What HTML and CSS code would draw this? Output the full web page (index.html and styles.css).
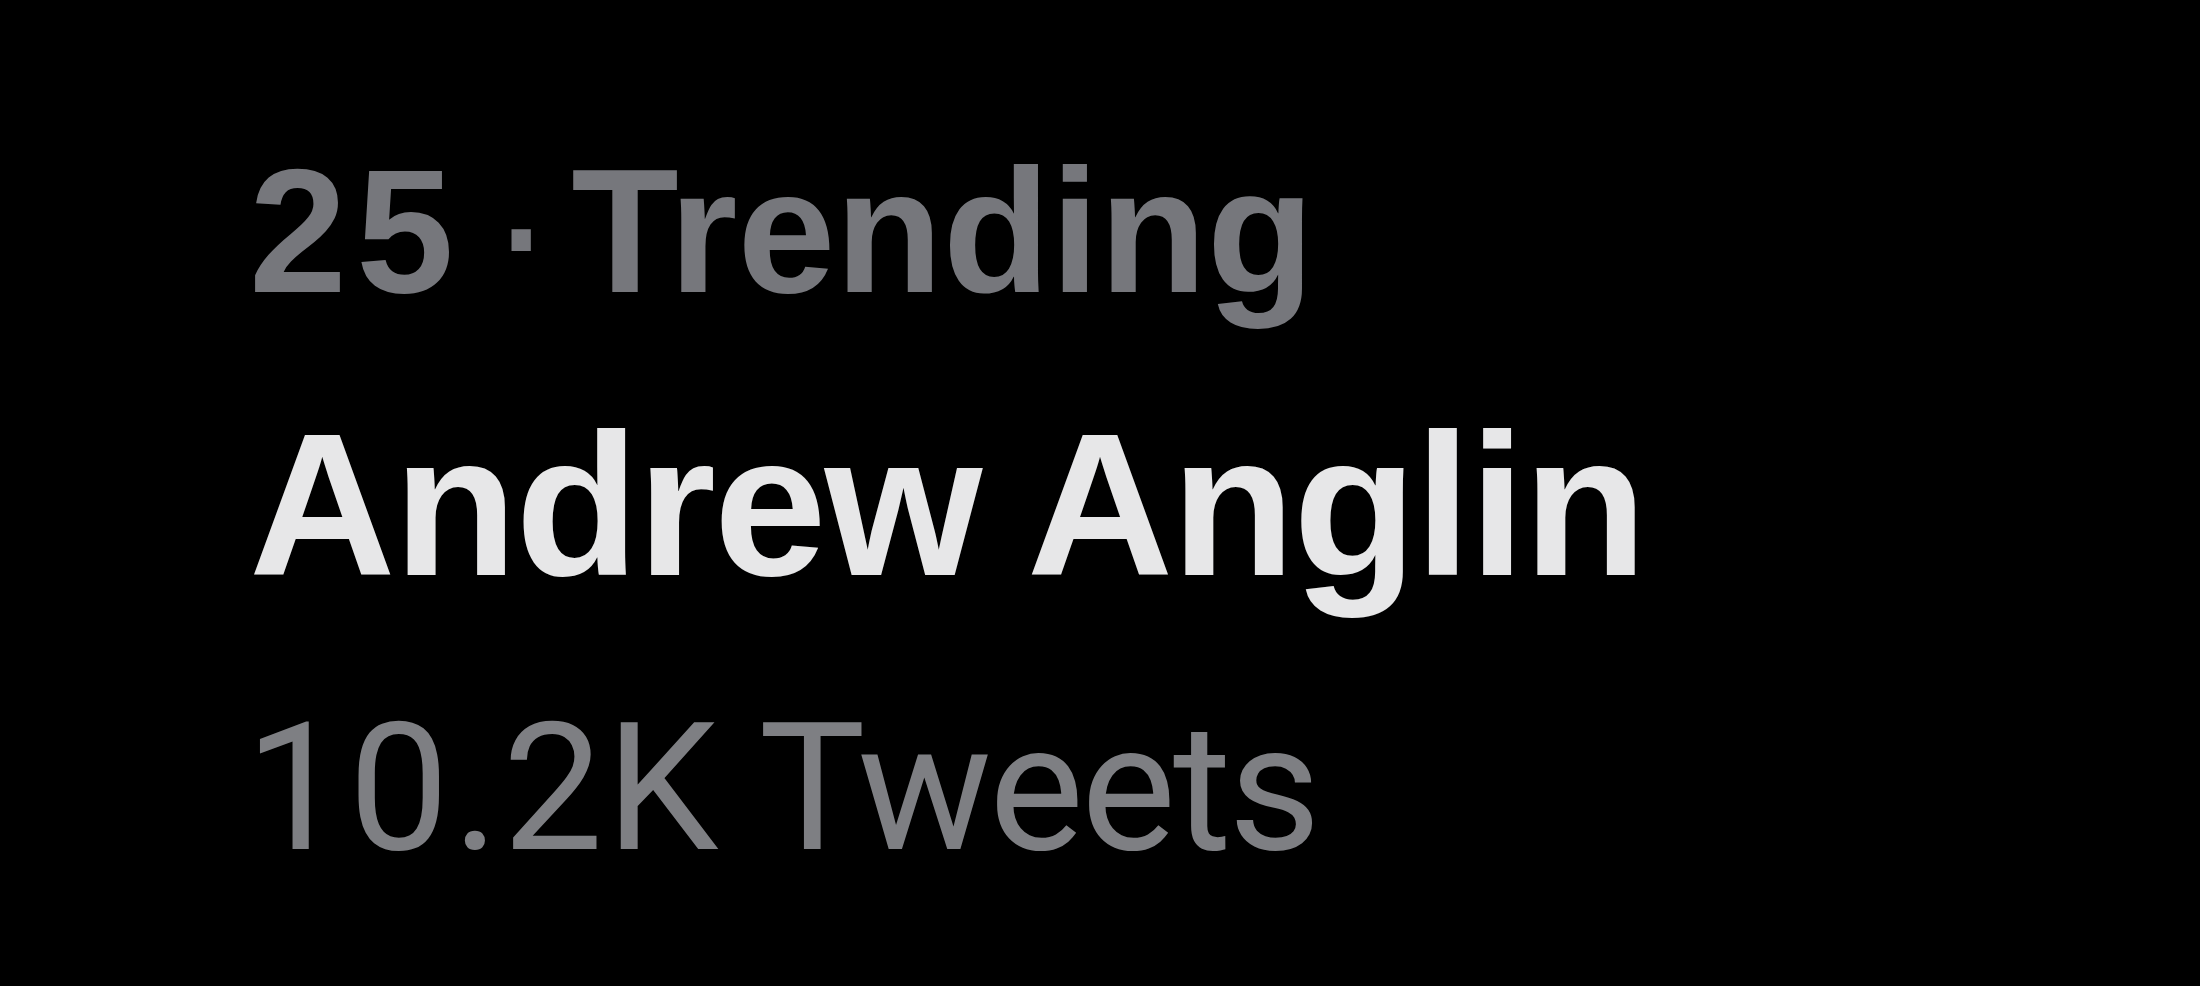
FILE: index.html
```html
<!DOCTYPE html>
<html lang="en">
<head>
<meta charset="utf-8">
<title>Trending</title>
<link rel="stylesheet" href="styles.css">
</head>
<body>
<div class="trend">
  <div class="meta"><span class="rank">25</span> <span class="dot">·</span><span class="tight"> </span>Trending</div>
  <div class="name">Andrew Anglin</div>
  <div class="count"><span class="num">10.2K</span> <span class="unit">Tweets</span></div>
</div>
</body>
</html>
```
FILE: styles.css
```css
html, body {
  margin: 0;
  padding: 0;
  background: #000;
  width: 2200px;
  height: 986px;
  overflow: hidden;
}
.trend {
  display: flex;
  flex-direction: column;
  padding: 111px 0 0 255px;
  font-family: "Liberation Sans", Arial, sans-serif;
}
.meta {
  font-size: 176px;
  line-height: 240px;
  font-weight: 700;
  color: #76777c;
  letter-spacing: 0;
  word-spacing: -20px;
  white-space: nowrap;
  margin-left: -6px;
}
.rank {
  letter-spacing: 9px;
}
.dot {
  font-weight: 400;
  display: inline-block;
  transform: translateY(-6px) scale(1.15);
}
.tight {
  word-spacing: -28px;
}
.name {
  font-size: 203px;
  line-height: 308px;
  font-weight: 700;
  color: #e7e7e8;
  letter-spacing: -2.2px;
  white-space: nowrap;
  margin-left: -6px;
}
.count {
  font-family: Roboto, "Liberation Sans", sans-serif;
  font-size: 179px;
  line-height: 258px;
  font-weight: 400;
  color: #7e7f83;
  white-space: nowrap;
  word-spacing: -7px;
  margin-left: -10px;
}
.num {
  letter-spacing: 3px;
}
.unit {
  letter-spacing: -3px;
}
```
